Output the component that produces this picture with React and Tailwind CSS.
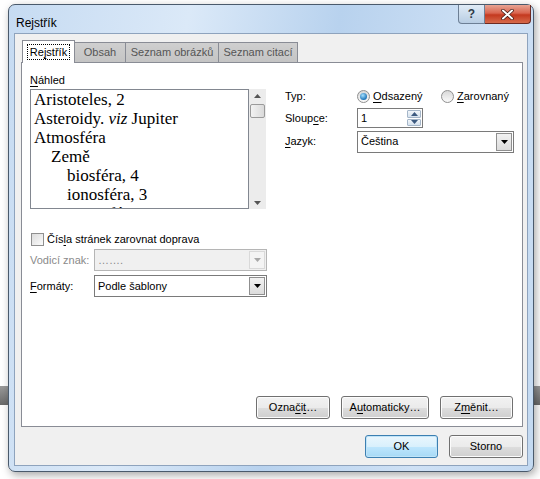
import { useState } from "react";

const ui = { fontFamily: '"Liberation Sans", "DejaVu Sans", sans-serif' };
const serif = { fontFamily: '"Liberation Serif", "DejaVu Serif", serif' };

function U({ children }) {
  return <span className="underline underline-offset-2">{children}</span>;
}

function Arrow({ disabled }) {
  return (
    <svg width="7" height="4" viewBox="0 0 7 4">
      <path d="M0 0h7L3.5 4z" fill={disabled ? "#a8a8a8" : "#000"} />
    </svg>
  );
}

function Select({ value, disabled, className }) {
  return (
    <div className={`flex h-[22px] items-stretch border ${disabled ? "border-[#b5b5b5] bg-[#f0f0f0]" : "border-[#7a7a7a] bg-white"} ${className}`}>
      <div className={`flex flex-1 items-center whitespace-nowrap pl-[3px] ${disabled ? "text-[#8a8a8a]" : "text-black"}`}>{value}</div>
      <div className={`m-px flex w-[16px] items-center justify-center border ${disabled ? "border-[#d9d9d9] bg-[#f4f4f4]" : "border-[#8f8f8f] bg-[linear-gradient(#f2f2f2,#dcdcdc)]"}`}>
        <Arrow disabled={disabled} />
      </div>
    </div>
  );
}

function Button({ children, className = "", def }) {
  return (
    <button
      className={`flex h-[23px] items-center justify-center whitespace-nowrap rounded-[3px] border text-[11px] text-black ${
        def
          ? "border-[#3c7fb1] bg-[linear-gradient(#eaf6fd_0%,#d9f0fc_50%,#bee6fd_51%,#a7d9f5_100%)] shadow-[inset_0_0_0_1px_#c0e4f8]"
          : "border-[#707070] bg-[linear-gradient(#f2f2f2_0%,#ebebeb_50%,#dddddd_51%,#cfcfcf_100%)] shadow-[inset_0_0_0_1px_#fcfcfc]"
      } ${className}`}
    >
      {children}
    </button>
  );
}

function Radio({ checked }) {
  return (
    <span className="flex h-[13px] w-[13px] items-center justify-center rounded-full border border-[#8f8f8f] bg-[linear-gradient(#d8d8d8,#fafafa)]">
      {checked && <span className="h-[7px] w-[7px] rounded-full bg-[radial-gradient(circle_at_40%_35%,#a6e1ff,#1f74b8_70%)]" />}
    </span>
  );
}

const entries = [
  { t: "Aristoteles, 2", l: 0 },
  { t: "Asteroidy. ", i: "viz", r: " Jupiter", l: 0 },
  { t: "Atmosféra", l: 0 },
  { t: "Země", l: 1 },
  { t: "biosféra, 4", l: 2 },
  { t: "ionosféra, 3", l: 2 },
  { t: "troposféra, 3", l: 2 },
];

const indent = ["pl-[3px]", "pl-[20px]", "pl-[36px]"];

export default function App() {
  const [tab] = useState(0);
  const tabs = [
    { n: "Rejstřík", w: "w-[53px]" },
    { n: "Obsah", w: "w-[52px]" },
    { n: "Seznam obrázků", w: "w-[94px]" },
    { n: "Seznam citací", w: "w-[80px]" },
  ];

  return (
    <div className="relative h-[479px] w-[540px] overflow-hidden bg-white text-[11px]" style={ui}>
      <div className="absolute left-0 top-[386px] h-[19px] w-[540px] bg-[linear-gradient(#9a9a9a,#6a6a6a)]" />
      <div className="relative ml-[8px] mt-[4px] flex h-[468px] w-[526px] flex-col rounded-[7px] border border-[#4a5a6c] bg-[linear-gradient(100deg,#c6dbf2_0%,#dbe9f8_30%,#b8d2ee_55%,#cfe1f5_80%,#c3d9f1_100%)] shadow-[2px_3px_8px_rgba(0,0,0,0.35)]">
        {/* title bar */}
        <div className="flex h-[28px] items-start">
          <div className="pl-[7px] pt-[11px] text-[12px] leading-[14px] text-black">Rejstřík</div>
          <div className="ml-auto mr-[2px] flex">
            <div className="flex h-[19px] w-[27px] items-center justify-center rounded-bl-[4px] border border-t-0 border-[#6d7f95] bg-[linear-gradient(#e0ebf6,#b8cde3)] text-[12px] font-bold text-[#2e3a48]">?</div>
            <div className="flex h-[19px] w-[46px] items-center justify-center rounded-br-[4px] border border-l-0 border-t-0 border-[#6d2a22] bg-[linear-gradient(#e8a493_0%,#d9654f_45%,#c4391f_55%,#d66a4b_100%)]">
              <svg width="13" height="11" viewBox="0 0 13 11">
                <path d="M2 1.5l9 8M11 1.5l-9 8" stroke="#3a1510" strokeWidth="3.4" strokeLinecap="round" />
                <path d="M2 1.5l9 8M11 1.5l-9 8" stroke="#fff" strokeWidth="2" strokeLinecap="round" />
              </svg>
            </div>
          </div>
        </div>

        {/* client area */}
        <div className="mx-[5px] mb-[5px] flex flex-1 flex-col border border-[#8ea3bd] bg-[#f0f0f0] pl-[6px] pr-[4px] pt-[6px]">
          {/* tabs */}
          <div className="flex h-[22px] items-end pl-[1px]">
            {tabs.map((t, i) =>
              i === tab ? (
                <div key={t.n} className={`relative z-10 -mb-px flex h-[23px] ${t.w} items-center justify-center border border-b-0 border-[#898c95] bg-white`}>
                  <span className="whitespace-nowrap border border-dotted border-black px-[2px] leading-[14px]">
                    Re<U>j</U>střík
                  </span>
                </div>
              ) : (
                <div key={t.n} className={`-ml-px flex h-[20px] ${t.w} items-center justify-center whitespace-nowrap border border-b-0 border-[#898c95] bg-[linear-gradient(#cfcfcf,#c4c4c4)] text-[#555]`}>
                  {t.n}
                </div>
              )
            )}
          </div>

          {/* panel */}
          <div className="flex h-[365px] flex-col border border-[#898c95] bg-white px-[8px] pt-[10px]">
            <div className="flex">
              {/* left column */}
              <div className="flex w-[236px] flex-col">
                <div className="h-[15px] leading-[14px]">
                  <U>N</U>áhled
                </div>
                <div className="mt-[1px] flex h-[120px]">
                  <div className="h-full w-[220px] overflow-hidden border border-[#828790] text-[17px] leading-[19px] text-black" style={serif}>
                    {entries.map((e) => (
                      <div key={e.t} className={`whitespace-nowrap ${indent[e.l]}`}>
                        {e.t}
                        {e.i && <i>{e.i}</i>}
                        {e.r}
                      </div>
                    ))}
                  </div>
                  <div className="flex w-[17px] flex-col items-center bg-[#ececec]">
                    <div className="flex h-[13px] items-center">
                      <svg width="7" height="4" viewBox="0 0 7 4"><path d="M3.5 0L7 4H0z" fill="#555" /></svg>
                    </div>
                    <div className="mt-[2px] h-[14px] w-[15px] rounded-[2px] border border-[#9a9a9a] bg-[linear-gradient(90deg,#f2f2f2,#dadada)]" />
                    <div className="mt-auto flex h-[13px] items-center">
                      <svg width="7" height="4" viewBox="0 0 7 4"><path d="M0 0h7L3.5 4z" fill="#555" /></svg>
                    </div>
                  </div>
                </div>
              </div>

              {/* right column */}
              <div className="ml-[19px] flex flex-col pt-[15px]">
                <div className="flex h-[16px] items-center whitespace-nowrap">
                  <span className="w-[72px]">Typ:</span>
                  <Radio checked />
                  <span className="ml-[3px] w-[68px]"><U>O</U>dsazený</span>
                  <Radio />
                  <span className="ml-[3px]"><U>Z</U>arovnaný</span>
                </div>
                <div className="mt-[4px] flex h-[20px] items-center">
                  <span className="w-[72px]">Sloup<U>c</U>e:</span>
                  <div className="flex h-[20px] w-[66px] border border-[#7a7a7a] bg-white">
                    <div className="flex flex-1 items-center pl-[3px]">1</div>
                    <div className="m-px flex w-[14px] flex-col gap-px">
                      <div className="flex flex-1 items-center justify-center rounded-[1px] border border-[#a5b6c9] bg-[linear-gradient(#f2f6fa,#d6e2ee)]">
                        <svg width="7" height="4" viewBox="0 0 7 4"><path d="M3.5 0L7 4H0z" fill="#3d5a80" /></svg>
                      </div>
                      <div className="flex flex-1 items-center justify-center rounded-[1px] border border-[#a5b6c9] bg-[linear-gradient(#f2f6fa,#d6e2ee)]">
                        <svg width="7" height="4" viewBox="0 0 7 4"><path d="M0 0h7L3.5 4z" fill="#3d5a80" /></svg>
                      </div>
                    </div>
                  </div>
                </div>
                <div className="mt-[3px] flex h-[21px] items-center">
                  <span className="w-[72px]"><U>J</U>azyk:</span>
                  <Select value="Čeština" className="w-[157px]" />
                </div>
              </div>
            </div>

            {/* lower left */}
            <div className="mt-[23px] flex h-[14px] items-center pl-[1px]">
              <span className="h-[13px] w-[13px] border border-[#8f8f8f] bg-[linear-gradient(135deg,#dcdcdc,#fbfbfb)]" />
              <span className="ml-[3px] whitespace-nowrap">Čís<U>l</U>a stránek zarovnat doprava</span>
            </div>
            <div className="mt-[3px] flex items-center">
              <span className="w-[64px] whitespace-nowrap text-[#8a8a8a]">Vodicí znak:</span>
              <Select value="……." disabled className="w-[173px]" />
            </div>
            <div className="mt-[4px] flex items-center">
              <span className="w-[64px]"><U>F</U>ormáty:</span>
              <Select value="Podle šablony" className="w-[173px]" />
            </div>

            {/* buttons */}
            <div className="mt-auto mb-[7px] flex justify-end gap-[11px] pr-[1px]">
              <Button className="w-[74px]">Ozna<U>č</U>i<U>t</U>…</Button>
              <Button className="w-[88px]">A<U>u</U>tomaticky…</Button>
              <Button className="w-[73px]">Z<U>m</U>ěnit…</Button>
            </div>
          </div>

          {/* bottom buttons */}
          <div className="flex flex-1 items-center justify-end gap-[11px]">
            <Button def className="w-[73px]">OK</Button>
            <Button className="w-[74px]">Storno</Button>
          </div>
        </div>
      </div>
    </div>
  );
}
